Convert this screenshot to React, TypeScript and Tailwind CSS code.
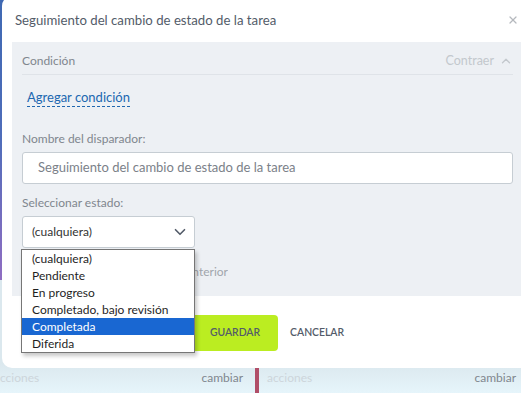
import React from 'react';
import { ChevronDown, ChevronUp, X } from 'lucide-react';

const options = ['(cualquiera)', 'Pendiente', 'En progreso', 'Completado, bajo revisión', 'Completada', 'Diferida'];

const BackgroundBar: React.FC = () => (
  <div className="absolute bottom-0 left-0 right-0 h-[30px] bg-gradient-to-b from-[#dbe8ee] to-[#e6f5fb] text-[12px] leading-[16px]">
    <div className="flex h-full items-end pb-[7px]">
      <div className="ml-[-6px] flex w-[249px] justify-between">
        <span className="text-[#cdd5db]">acciones</span>
        <span className="text-[#80868e]">cambiar</span>
      </div>
      <div className="ml-[24px] flex w-[249px] justify-between">
        <span className="text-[#cdd5db]">acciones</span>
        <span className="text-[#80868e]">cambiar</span>
      </div>
    </div>
    <div className="absolute left-[255px] top-0 h-full w-[4px] bg-[#b04e68]" />
  </div>
);

const StatusDropdown: React.FC = () => (
  <div className="absolute left-[21px] top-[249px] w-[174px] border border-[#767676] bg-white shadow-[2px_3px_4px_rgba(0,0,0,0.22)]">
    {options.map((opt) => (
      <div
        key={opt}
        className={
          opt === 'Completada'
            ? 'h-[17px] bg-[#1967d2] pl-[10px] text-[12px] leading-[17px] text-white'
            : 'h-[17px] pl-[10px] text-[12px] leading-[17px] text-[#1f1f1f]'
        }
      >
        {opt}
      </div>
    ))}
  </div>
);

export default function App() {
  return (
    <div
      className="relative h-[393px] w-[521px] overflow-hidden bg-[#dbe8ee]"
      style={{ fontFamily: 'Lato, "Open Sans", sans-serif' }}
    >
      <div className="absolute left-0 top-0 h-[280px] w-[4px] bg-gradient-to-b from-[#3f69b3] via-[#4f6dba] to-[#8f6dc2]" />
      <BackgroundBar />

      <div className="absolute left-[2px] top-[-4px] w-[531px] rounded-[10px] bg-white">
        <div className="flex h-[46px] items-center justify-between pl-[13px] pr-[14px] pt-[3px]">
          <span className="text-[13.2px] text-[#535c69]">Seguimiento del cambio de estado de la tarea</span>
          <X className="mb-[2px] h-[12px] w-[12px] text-[#b5b9be]" strokeWidth={2.5} />
        </div>

        <div className="mx-[10px] bg-[#edf0f4] px-[10px] pb-[14px]">
          <div className="flex h-[33px] items-end justify-between border-b border-[#dfe3e8] pb-[5px] text-[12px] leading-[16px]">
            <span className="text-[#80868e]">Condición</span>
            <span className="flex items-center gap-[5px] text-[12.5px] text-[#c3c8cd]">
              Contraer
              <ChevronUp className="h-[14px] w-[14px]" strokeWidth={2.2} />
            </span>
          </div>

          <div className="mt-[12px] h-[21px] pl-[5px] text-[13px] leading-[21px]">
            <span className="border-b border-dashed border-[#2067b0] pb-[1px] text-[#2067b0]">Agregar condición</span>
          </div>

          <div className="mt-[21px] h-[20px] text-[12px] leading-[20px] text-[#80868e]">Nombre del disparador:</div>
          <div className="mt-[3px] flex h-[32px] items-center rounded-[3px] border border-[#c6cdd3] bg-white pl-[15px] text-[13px] text-[#7b8189]">
            Seguimiento del cambio de estado de la tarea
          </div>

          <div className="mt-[9px] h-[20px] text-[12px] leading-[20px] text-[#80868e]">Seleccionar estado:</div>
          <div className="mt-[3px] flex h-[32px] w-[173px] items-center justify-between rounded-[3px] border border-[#c6cdd3] bg-white pl-[9px] pr-[5px] text-[12px] text-[#333]">
            (cualquiera)
            <ChevronDown className="h-[18px] w-[18px] text-[#535c69]" strokeWidth={2.2} />
          </div>

          <div className="mt-[14px] h-[20px] w-[206px] overflow-hidden whitespace-nowrap text-right text-[12px] leading-[20px] text-[#a1a6ac]">
            Tener en cuenta el estado anterior
          </div>
        </div>

        <div className="flex items-center justify-center gap-[12px] pb-[17px] pt-[19px] text-[10.4px] font-semibold text-[#535c69]">
          <button className="h-[36px] rounded-[4px] bg-[#bbed21] pl-[19px] pr-[18px]">GUARDAR</button>
          <button className="h-[36px]">CANCELAR</button>
        </div>
      </div>

      <StatusDropdown />
    </div>
  );
}
